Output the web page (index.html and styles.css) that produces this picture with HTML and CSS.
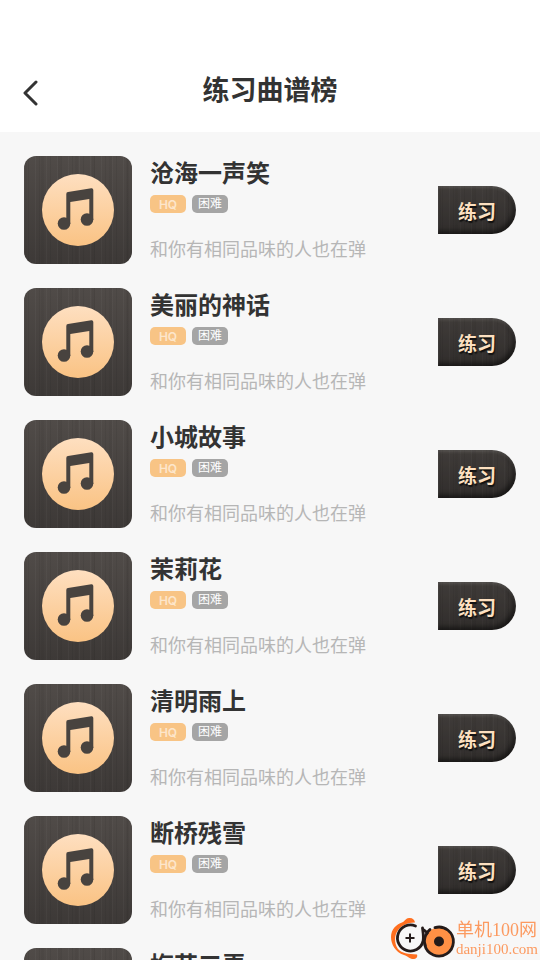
FILE: index.html
```
<!DOCTYPE html>
<html lang="zh-CN">
<head>
<meta charset="utf-8">
<meta name="viewport" content="width=device-width, initial-scale=1">
<title>练习曲谱榜</title>
<link rel="stylesheet" href="styles.css">
</head>
<body>
<svg class="defs" aria-hidden="true">
  <defs>
    <linearGradient id="peach" x1="0" y1="0" x2="0" y2="1">
      <stop offset="0" stop-color="#fedfc0"/>
      <stop offset="1" stop-color="#fac384"/>
    </linearGradient>
    <symbol id="note" viewBox="0 0 72 72">
      <circle cx="36" cy="36" r="36" fill="url(#peach)"/>
      <g fill="#48433f">
        <path d="M24.300 20 Q24.300 18.200 26 18 L49.300 14.200 Q51.300 14 51.300 16 V46 H47.300 V25 L28.300 28 V50 H24.300 Z"/>
        <circle cx="22" cy="49.500" r="6.300"/>
        <circle cx="45" cy="45.500" r="6.300"/>
      </g>
    </symbol>
  </defs>
</svg>
<header class="topbar">
  <button class="back" type="button" aria-label="返回">
    <svg viewBox="0 0 16 26"><path d="M13 2 L2 13 L13 24" fill="none" stroke="#333" stroke-width="3" stroke-linecap="round" stroke-linejoin="round"/></svg>
  </button>
  <h1>练习曲谱榜</h1>
</header>
<main>
  <ul class="songs">
    <li class="song">
      <div class="cover"><svg><use href="#note"/></svg></div>
      <div class="info"><h2>沧海一声笑</h2><div class="tags"><span class="tag hq">HQ</span><span class="tag">困难</span></div><p>和你有相同品味的人也在弹</p></div>
      <button class="practice" type="button">练习</button>
    </li>
    <li class="song">
      <div class="cover"><svg><use href="#note"/></svg></div>
      <div class="info"><h2>美丽的神话</h2><div class="tags"><span class="tag hq">HQ</span><span class="tag">困难</span></div><p>和你有相同品味的人也在弹</p></div>
      <button class="practice" type="button">练习</button>
    </li>
    <li class="song">
      <div class="cover"><svg><use href="#note"/></svg></div>
      <div class="info"><h2>小城故事</h2><div class="tags"><span class="tag hq">HQ</span><span class="tag">困难</span></div><p>和你有相同品味的人也在弹</p></div>
      <button class="practice" type="button">练习</button>
    </li>
    <li class="song">
      <div class="cover"><svg><use href="#note"/></svg></div>
      <div class="info"><h2>茉莉花</h2><div class="tags"><span class="tag hq">HQ</span><span class="tag">困难</span></div><p>和你有相同品味的人也在弹</p></div>
      <button class="practice" type="button">练习</button>
    </li>
    <li class="song">
      <div class="cover"><svg><use href="#note"/></svg></div>
      <div class="info"><h2>清明雨上</h2><div class="tags"><span class="tag hq">HQ</span><span class="tag">困难</span></div><p>和你有相同品味的人也在弹</p></div>
      <button class="practice" type="button">练习</button>
    </li>
    <li class="song">
      <div class="cover"><svg><use href="#note"/></svg></div>
      <div class="info"><h2>断桥残雪</h2><div class="tags"><span class="tag hq">HQ</span><span class="tag">困难</span></div><p>和你有相同品味的人也在弹</p></div>
      <button class="practice" type="button">练习</button>
    </li>
    <li class="song">
      <div class="cover"><svg><use href="#note"/></svg></div>
      <div class="info"><h2>梅花三弄</h2></div>
    </li>
  </ul>
</main>
<aside class="watermark">
  <svg viewBox="0 0 64 42" aria-hidden="true">
    <path fill="#ff6f1f" d="M22 4.500 C16 5 11 6.500 6.500 11.500 C2 17 2 25 6 31 C10 35.500 16 36 25 36.500 C26 39 24 41.500 20 41 C16 40 16 38 12 37 C3 34 -1 26 -1 19 C-1 11 5 6 10 4.500 C13 3.500 13 0.500 17 0 Q22 -0.500 23 4.500 Z"/>
    <circle cx="47" cy="23.500" r="14" fill="#ff9045"/>
    <g fill="none" stroke="#241b1a" stroke-width="2.800" stroke-linecap="round">
      <path d="M23.500 8 A13 13 0 1 0 31 23.500 C32 19 31 14 30.500 10"/>
      <path d="M32 12 L35 14.500 L38 11.500"/>
      <path d="M43 9.600 A14.500 14.500 0 1 1 36 14 C32 18 31.500 23 33.500 28"/>
      <path d="M18 15.500 V24.500 M13.500 20 H22.500" stroke-width="2" stroke-linecap="butt"/>
    </g>
    <circle cx="47" cy="23.500" r="5" fill="#241b1a"/>
  </svg>
  <div class="brand"><span class="name">单机100网</span><span class="site">danji100.com</span></div>
</aside>
</body>
</html>
```
FILE: styles.css
```
* {
  box-sizing: border-box;
}

body {
  margin: 0;
  height: 100vh;
  overflow: hidden;
  background: #f7f7f7;
  color: #333;
  font-family: "Noto Sans CJK SC", sans-serif;
}

h1,
h2,
p,
ul {
  margin: 0;
  padding: 0;
}

button {
  border: 0;
  padding: 0;
  font-family: inherit;
  cursor: pointer;
}

.defs {
  position: absolute;
  width: 0;
  height: 0;
}

.topbar {
  display: grid;
  grid-template-columns: 16px 1fr 16px;
  align-items: center;
  padding: 68px 23px 20px;
  background: #fff;
}

.back {
  height: 44px;
  padding-top: 6px;
  background: none;
}

.back svg {
  display: block;
  width: 16px;
  height: 26px;
}

h1 {
  padding-bottom: 2px;
  font-size: 27px;
  font-weight: 700;
  line-height: 42px;
  text-align: center;
}

.songs {
  display: flex;
  flex-direction: column;
  gap: 24px;
  padding: 24px;
  list-style: none;
}

.song {
  display: flex;
  align-items: center;
  gap: 18px;
}

.cover,
.practice {
  background:
    repeating-linear-gradient(90deg, rgb(255 255 255 / 3%) 0 1px, transparent 1px 4px, rgb(0 0 0 / 6%) 4px 5px, transparent 5px 11px),
    repeating-linear-gradient(90deg, rgb(0 0 0 / 4%) 0 3px, transparent 3px 17px),
    linear-gradient(#504b48, #3d3937);
}

.cover {
  display: grid;
  place-items: center;
  flex: none;
  width: 108px;
  height: 108px;
  border-radius: 12px;
}

.cover svg {
  width: 72px;
  height: 72px;
}

.info {
  flex: 1;
  align-self: stretch;
}

h2 {
  font-size: 24px;
  font-weight: 700;
  line-height: 32px;
}

.tags {
  display: flex;
  gap: 6px;
  padding: 7px 0 23px;
}

.tag {
  width: 36px;
  height: 18px;
  border-radius: 5px;
  background: #a5a5a5;
  color: #fff;
  font-size: 12px;
  line-height: 16px;
  text-align: center;
}

.hq {
  background: #f8c485;
  color: #fde6cb;
  font-family: Inter, sans-serif;
  font-weight: 600;
  line-height: 19px;
}

.info p {
  color: #b6b6b6;
  font-size: 18px;
  font-weight: 400;
  line-height: 24px;
}

.practice {
  width: 78px;
  height: 48px;
  border-radius: 0 24px 24px 0;
  box-shadow: inset 0 2px 3px rgb(255 255 255 / 12%), inset -3px -3px 5px rgb(0 0 0 / 50%), inset 0 0 0 48px rgb(0 0 0 / 20%);
  color: #fde0c0;
  font-size: 19px;
  font-weight: 700;
  text-shadow: 1px 2px 1px #111;
}

.watermark {
  position: fixed;
  right: 2px;
  bottom: 0;
  display: flex;
  align-items: center;
}

.watermark svg {
  width: 64px;
  height: 42px;
  overflow: visible;
}

.brand {
  display: flex;
  flex-direction: column;
  color: #fc9a60;
  font-family: "Liberation Serif", "Noto Sans CJK SC", serif;
}

.name {
  font-size: 18px;
  line-height: 20px;
}

.site {
  font-size: 15px;
  line-height: 18px;
}
```
